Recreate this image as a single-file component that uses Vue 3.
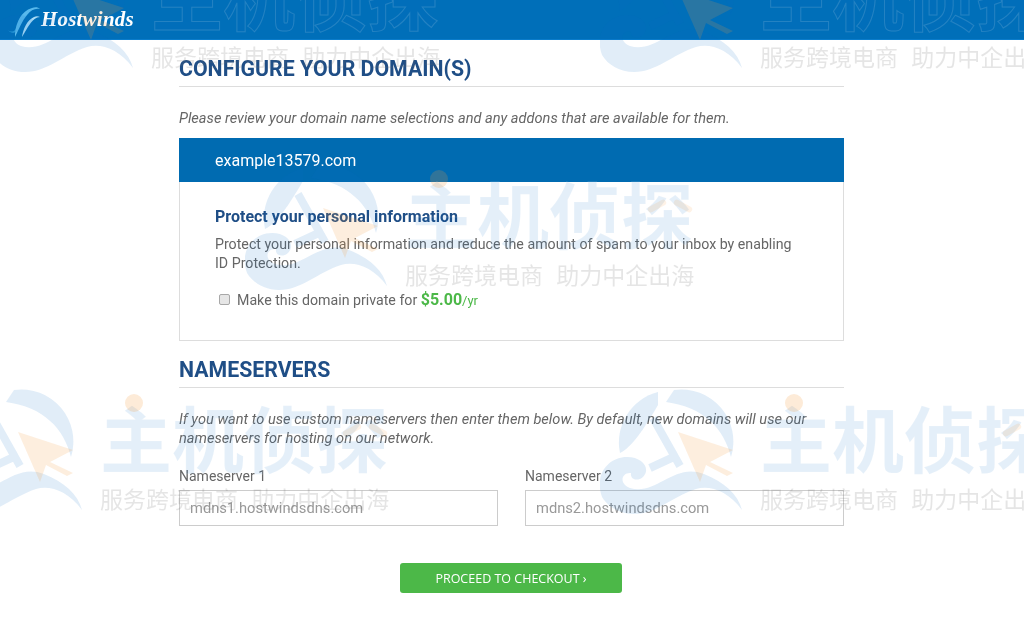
<script setup>
const marks = [
  { left: -9, top: -53 },
  { left: 600, top: -53 },
  { left: 245, top: 165 },
  { left: -60, top: 389 },
  { left: 600, top: 389 },
]
const nameservers = [
  { label: 'Nameserver 1', placeholder: 'mdns1.hostwindsdns.com' },
  { label: 'Nameserver 2', placeholder: 'mdns2.hostwindsdns.com' },
]
</script>

<template>
  <div class="page">
    <header class="topbar">
      <svg class="brand-icon" viewBox="0 0 34 34" width="34" height="34">
        <path d="M1 27c2 3 6 4 9 1 3-3 2-8 6-13-5 3-6 9-8 12-2 2-5 2-7 0z" fill="#2a9bd8" />
        <path d="M8 34C8 21 14 8 25 5c3-1 6-1 8 1-5-1-9 1-13 6-5 6-8 14-12 22z" fill="#58b9ec" />
        <path d="M15 34c1-8 5-17 12-20 2-1 4-1 6 0-4 0-7 3-10 7-3 4-5 8-8 13z" fill="#a9dcf7" />
      </svg>
      <span class="brand-name">Hostwinds</span>
    </header>

    <main class="content">
      <h2 class="section-title first">CONFIGURE YOUR DOMAIN(S)</h2>
      <p class="hint review">Please review your domain name selections and any addons that are available for them.</p>

      <section class="card">
        <div class="card-head">example13579.com</div>
        <div class="card-body">
          <h3 class="card-title">Protect your personal information</h3>
          <p class="card-text">Protect your personal information and reduce the amount of spam to your inbox by enabling ID Protection.</p>
          <label class="private">
            <input type="checkbox" />
            <span>Make this domain private for <b class="price">$5.00</b><small class="per">/yr</small></span>
          </label>
        </div>
      </section>

      <h2 class="section-title second">NAMESERVERS</h2>
      <p class="hint custom">If you want to use custom nameservers then enter them below. By default, new domains will use our nameservers for hosting on our network.</p>

      <div class="ns-grid">
        <div v-for="ns in nameservers" :key="ns.label" class="ns-field">
          <label class="ns-label">{{ ns.label }}</label>
          <input class="ns-input" type="text" :placeholder="ns.placeholder" />
        </div>
      </div>

      <div class="actions">
        <button class="checkout" type="button">PROCEED TO CHECKOUT ›</button>
      </div>
    </main>

    <!-- watermark laid over the whole page -->
    <div class="watermarks">
      <div
        v-for="m in marks"
        :key="m.left + '-' + m.top"
        class="mark"
        :style="{ left: m.left + 'px', top: m.top + 'px' }"
      >
        <svg class="mark-logo" viewBox="0 0 145 125" width="145" height="125">
          <g fill="#0a6cc4" fill-opacity=".12">
            <path d="M74 1A52 52 0 0 1 131 68C124 40 104 18 66 13z" />
            <path d="M58 3A52 52 0 0 0 20 64C32 58 44 40 58 16z" />
            <path d="M2 108C-6 86 8 68 27 68c16 0 24 12 16 20-6 5-13 2-12-4-9-1-13 10-1 15 26 8 44-26 74-14 20 8 34 20 38 36-14-19-32-25-46-21-24 8-40 25-62 25-14 0-26-7-32-17z" />
          </g>
          <path d="M53 29l27 48M50 79l28-13" fill="none" stroke="#0a6cc4" stroke-opacity=".12" stroke-width="8" />
          <path d="M78 43l55 18-23 12 23 11-6 3-21-11-6 17z" fill="#f59a3a" fill-opacity=".17" />
        </svg>
        <div class="mark-text">
          <div class="mark-title">主机侦探<i class="mark-dot"></i><i class="mark-accent left"></i><i class="mark-accent right"></i></div>
          <div class="mark-sub">服务跨境电商 助力中企出海</div>
        </div>
      </div>
    </div>
  </div>
</template>

<style>
html,
body {
  margin: 0;
  background: #fff;
}
</style>

<style scoped>
.page {
  position: relative;
  height: 617px;
  overflow: hidden;
  background: #fff;
  font-family: Roboto, "Liberation Sans", sans-serif;
  font-size: 14px;
  color: #666;
  filter: blur(0.35px);
}
.topbar {
  height: 39px;
  background: #006fb9;
  border-bottom: 1px solid #0a7ccb;
  display: flex;
  align-items: center;
  padding-left: 7px;
}
.brand-icon {
  flex: none;
}
.brand-name {
  font-family: "Liberation Serif", serif;
  font-style: italic;
  font-weight: 700;
  font-size: 21px;
  color: #fff;
  letter-spacing: 0.2px;
}
.content {
  width: 665px;
  margin-left: 179px;
}
.section-title {
  margin: 0;
  font-size: 21.3px;
  line-height: 24px;
  font-weight: 700;
  color: #1f4e86;
  padding-bottom: 5px;
  border-bottom: 1px solid #ddd;
}
.section-title.first {
  padding-top: 17px;
}
.section-title.second {
  margin-top: 17px;
}
.hint {
  margin: 0;
  font-size: 14.6px;
  font-style: italic;
  line-height: 19px;
}
.hint.review {
  margin-top: 22px;
}
.hint.custom {
  margin-top: 22px;
  padding-right: 20px;
}
.card {
  margin-top: 10px;
  border: 1px solid #ddd;
  height: 203px;
  box-sizing: border-box;
}
.card-head {
  margin: -1px -1px 0;
  height: 44px;
  padding-left: 36px;
  display: flex;
  align-items: center;
  background: #006bb1;
  color: #fff;
  font-size: 16px;
}
.card-body {
  padding: 25px 35px 0;
}
.card-title {
  margin: 0;
  font-size: 16px;
  line-height: 20px;
  font-weight: 700;
  color: #1f4e86;
}
.card-text {
  margin: 8px 0 0;
  font-size: 14.2px;
  line-height: 19px;
}
.private {
  display: flex;
  align-items: center;
  margin-top: 15px;
  height: 22px;
  font-size: 14.2px;
}
.private input {
  appearance: none;
  box-sizing: border-box;
  margin: 0 7px 0 4px;
  width: 11px;
  height: 11px;
  border: 1px solid #a8a8a8;
  border-radius: 2px;
  background: #e6e6e6;
}
.price {
  font-size: 16px;
  color: #4cb848;
}
.per {
  font-size: 13px;
  color: #4cb848;
}
.ns-grid {
  display: grid;
  grid-template-columns: 319px 319px;
  column-gap: 27px;
  margin-top: 19px;
}
.ns-label {
  display: block;
  line-height: 19px;
  margin-bottom: 4px;
}
.ns-input {
  display: block;
  box-sizing: border-box;
  width: 100%;
  height: 36px;
  padding: 0 10px;
  border: 1px solid #ccc;
  background: transparent;
  font-family: inherit;
  font-size: 14.7px;
  outline: none;
}
.ns-input::placeholder {
  color: #999;
  opacity: 1;
}
.actions {
  display: flex;
  justify-content: center;
  padding-right: 1px;
  margin-top: 37px;
}
.checkout {
  width: 222px;
  height: 30px;
  border: none;
  border-radius: 3px;
  background: #4cb848;
  color: #fff;
  font-family: "Open Sans", sans-serif;
  font-size: 12.5px;
  cursor: pointer;
}
.watermarks {
  position: absolute;
  inset: 0;
  pointer-events: none;
}
.mark {
  position: absolute;
  display: flex;
  gap: 15px;
}
.mark-logo {
  flex: none;
}
.mark-text {
  width: 300px;
}
.mark-title {
  position: relative;
  padding-top: 2px;
  font-family: "Noto Sans CJK SC", sans-serif;
  font-size: 72px;
  font-weight: 700;
  line-height: 90px;
  color: rgba(10, 108, 196, 0.11);
  -webkit-text-stroke: 1px rgba(255, 255, 255, 0.14);
}
.mark-dot {
  position: absolute;
  left: 25px;
  top: 5px;
  width: 18px;
  height: 18px;
  border-radius: 50%;
  background: rgba(245, 154, 58, 0.2);
}
.mark-accent {
  position: absolute;
  top: 38px;
  width: 20px;
  height: 6px;
  border-radius: 3px;
  background: rgba(245, 154, 58, 0.13);
}
.mark-accent.left {
  left: 242px;
  transform: rotate(-28deg);
}
.mark-accent.right {
  left: 268px;
  transform: rotate(28deg);
}
.mark-sub {
  margin-top: 1px;
  font-family: "Noto Sans CJK SC", sans-serif;
  font-size: 23px;
  line-height: 32px;
  word-spacing: 8px;
  color: rgba(110, 110, 110, 0.18);
  white-space: nowrap;
}
</style>
